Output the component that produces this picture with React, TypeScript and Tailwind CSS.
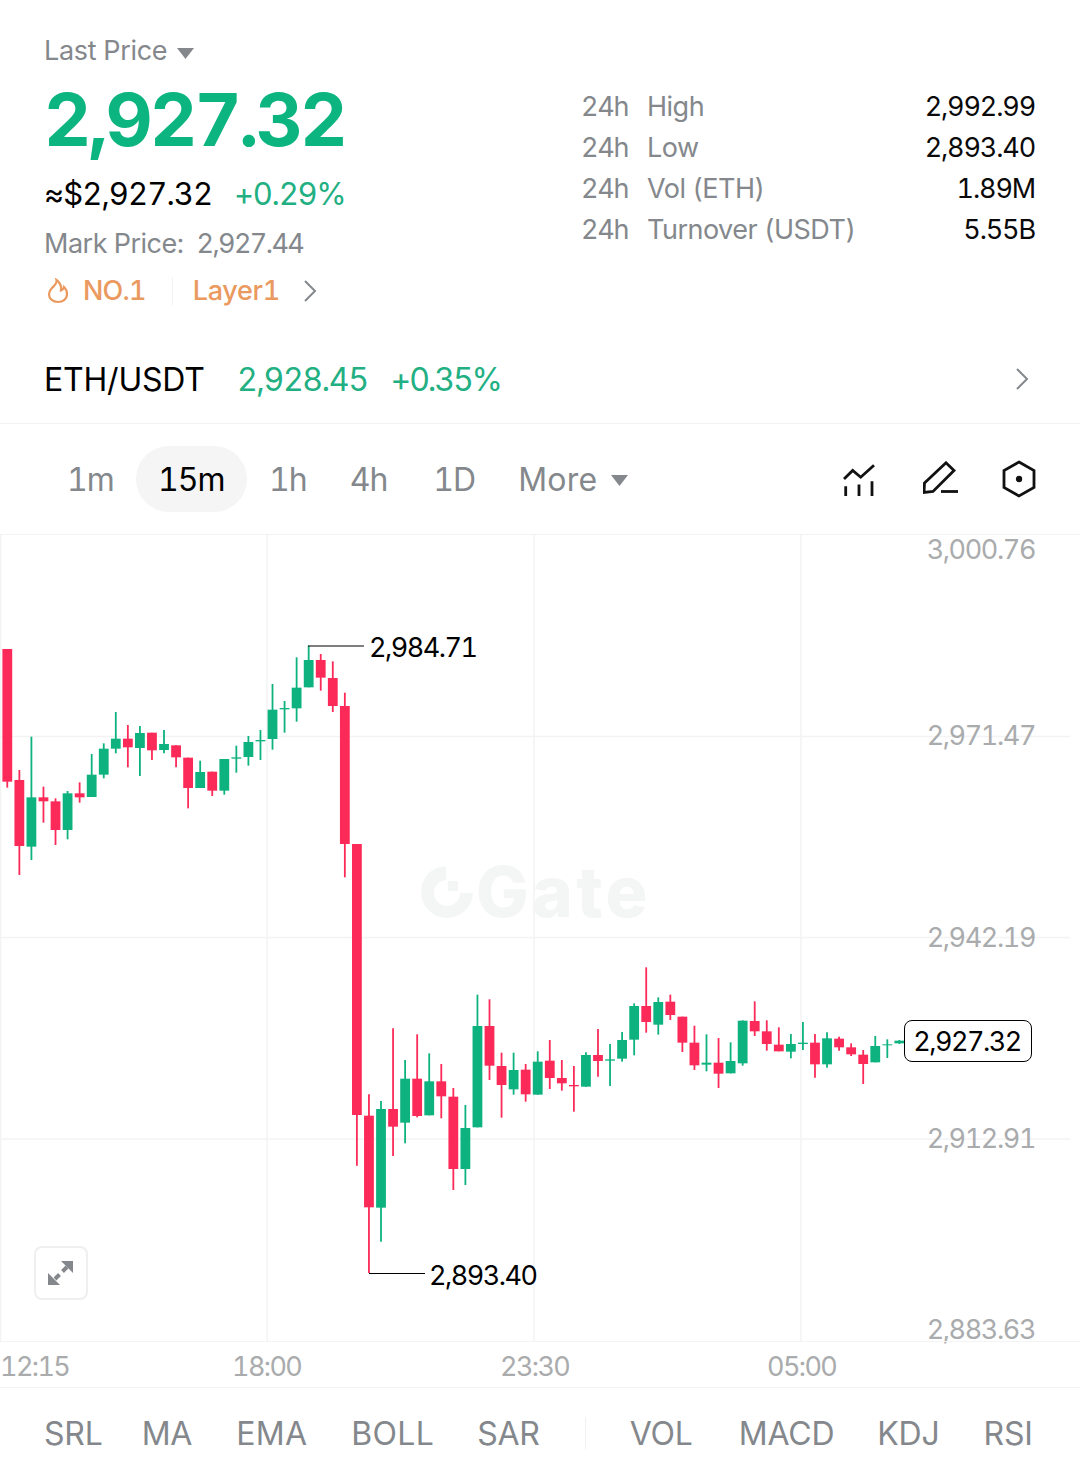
import React from "react";

const G = "#0db27e";
const R = "#fb2a58";

// [color, wickTop, bodyTop, bodyBottom, wickBottom]
type C = [0 | 1, number, number, number, number];
const z3 = (a: number) => 630 + a / 3;
const z4 = (a: number) => 960 + a / 3;

const raw1: C[] = [
  [1, 57, 57, 455, 473], [1, 420, 450, 648, 735], [0, 320, 502, 650, 690], [1, 470, 502, 514, 578],
  [1, 505, 514, 600, 645], [0, 483, 490, 600, 628], [1, 457, 490, 502, 518], [0, 372, 434, 501, 501],
  [0, 340, 356, 434, 445], [0, 246, 326, 356, 370], [1, 285, 326, 352, 412], [0, 288, 309, 354, 438],
  [1, 308, 308, 361, 390], [0, 300, 342, 360, 370], [1, 346, 346, 382, 412], [1, 383, 383, 474, 535],
  [0, 392, 426, 474, 474], [1, 425, 425, 482, 498], [0, 387, 387, 482, 494], [0, 347, 382, 386, 428],
  [0, 318, 336, 381, 407], [0, 300, 330, 334, 390], [0, 162, 239, 327, 359], [0, 213, 234, 238, 308],
  [0, 82, 173, 235, 275], [0, 47, 90, 172, 172], [1, 72, 90, 143, 182], [1, 94, 144, 228, 246],
  [1, 188, 228, 642, 742],
];
const raw2: C[] = [
  [1, -348, -348, 465, 617], [1, 403, 467, 742, 939], [0, 423, 447, 743, 845], [1, 205, 447, 500, 588],
  [0, 300, 356, 488, 550], [1, 223, 356, 468, 472], [0, 280, 364, 466, 466], [1, 312, 364, 409, 475],
  [1, 384, 410, 627, 690], [0, 435, 504, 627, 675], [0, 104, 198, 502, 502], [1, 118, 198, 317, 360],
  [1, 278, 318, 375, 473], [0, 278, 330, 388, 404], [1, 312, 329, 403, 425], [0, 274, 305, 404, 404],
  [1, 240, 302, 354, 387], [1, 300, 354, 370, 392], [1, 318, 375, 379, 455], [0, 277, 285, 380, 380],
  [1, 207, 285, 303, 350], [0, 252, 298, 302, 378], [0, 216, 240, 296, 305], [0, 130, 138, 239, 286],
  [1, 22, 138, 186, 218], [0, 112, 126, 194, 224], [1, 104, 125, 165, 180], [1, 170, 170, 248, 276],
  [1, 197, 248, 316, 330], [0, 223, 308, 314, 334], [1, 234, 308, 341, 384], [0, 247, 303, 340, 340],
  [0, 181, 182, 310, 317], [1, 124, 183, 214, 228], [1, 181, 214, 252, 272], [1, 202, 254, 274, 274],
  [0, 222, 252, 275, 295], [0, 186, 248, 252, 270], [1, 222, 248, 313, 353], [0, 217, 235, 313, 323],
  [1, 230, 236, 262, 272], [1, 250, 262, 283, 288], [1, 270, 284, 312, 372], [0, 228, 258, 307, 307],
  [0, 238, 253, 256, 294], [0, 240, 242, 250, 252],
];

const candles: C[] = [
  ...raw1.map(([c, a, b, d, e]) => [c, z3(a), z3(b), z3(d), z3(e)] as C),
  ...raw2.map(([c, a, b, d, e]) => [c, z4(a), z4(b), z4(d), z4(e)] as C),
];

function Chart() {
  const top = 535;
  return (
    <svg width="1080" height="806" viewBox={`0 ${top} 1080 806`} className="absolute left-0 top-0">
      {[0.5, 267, 534, 801].map((x) => (
        <line key={x} x1={x} x2={x} y1={top} y2={1341} stroke="#f3f3f3" strokeWidth="1.5" />
      ))}
      {[736.5, 937.5, 1139].map((y) => (
        <line key={y} x1={0} x2={1070} y1={y} y2={y} stroke="#f3f3f3" strokeWidth="1.5" />
      ))}
      {candles.map(([c, wt, bt, bb, wb], i) => {
        const x = 7.3 + i * 12.055;
        const col = c ? R : G;
        return (
          <g key={i}>
            <line x1={x} x2={x} y1={wt} y2={wb} stroke={col} strokeWidth="1.8" />
            <rect x={x - 4.9} y={bt} width={9.8} height={bb - bt} fill={col} />
          </g>
        );
      })}
      <line x1={308} x2={364} y1={646} y2={646} stroke="#000" strokeWidth="1.2" />
      <line x1={369} x2={425} y1={1273.5} y2={1273.5} stroke="#000" strokeWidth="1.2" />
    </svg>
  );
}

function Logo() {
  return (
    <svg width="56" height="56" viewBox="0 0 56 56" className="shrink-0">
      <path d="M27 2A26 26 0 1 0 54 29H41A13 13 0 1 1 27 16Z" fill="#f4f5f5" />
      <rect x="29" y="17" width="10" height="10" fill="#f4f5f5" />
    </svg>
  );
}

export default function App() {
  const axis: [string, string][] = [
    ["3,000.76", "top-[0px]"],
    ["2,971.47", "top-[186px]"],
    ["2,942.19", "top-[388px]"],
    ["2,912.91", "top-[589px]"],
    ["2,883.63", "top-[780px]"],
  ];
  return (
    <div className="w-[1080px] h-[1457px] bg-white overflow-hidden font-['Inter',sans-serif] text-black tabular-nums tracking-[-0.2px]">
      {/* header */}
      <section className="h-[424px] border-b border-[#f2f2f2] px-[44px] pt-[33px]">
        <div className="flex justify-between">
          <div className="w-[320px]">
            <div className="flex items-center gap-[10px] text-[27px] leading-[36px] text-[#84888c] tracking-[-0.3px]">
              Last Price
              <svg width="17" height="11" viewBox="0 0 17 11" className="mt-[4px]"><path d="M0 0H17L8.5 11Z" fill="#84888c" /></svg>
            </div>
            <div className="mt-[6px] text-[73px] leading-[90px] font-bold text-[#0cb57f] tracking-[-2.7px]">2,927.32</div>
            <div className="mt-[9px] flex items-center text-[31px] leading-[40px]">
              <span className="w-[190px] tracking-[-0.9px]">≈$2,927.32</span>
              <span className="text-[#22b083] tracking-[-1.3px]">+0.29%</span>
            </div>
            <div className="mt-[12px] flex text-[27px] leading-[36px] text-[#84888c] tracking-[-0.5px]">
              <span>Mark Price:</span>
              <span className="ml-[13px] tracking-[-1.6px]">2,927.44</span>
            </div>
            <div className="mt-[11px] flex items-center text-[27px] leading-[36px] font-medium text-[#ea9a5f] tracking-[-0.3px]">
              <svg width="22" height="26" viewBox="0 0 22 26" fill="none" stroke="#ea9a5f" strokeWidth="2.2" className="ml-[3px]">
                <path d="M9.5 2C10.5 6 7 7.5 4.5 10.5C2.5 13 2 15 2 16.5C2 21 6 24 11 24C16 24 20 21 20 16C20 13 18.5 10.5 17 9C16.5 11 15.5 12 14 12.5C14.5 8.5 13 4.5 9.5 2Z" />
              </svg>
              <span className="ml-[14px] tracking-[-0.8px]">NO.1</span>
              <span className="ml-[26px] w-px h-[28px] bg-[#f2f2f2]" />
              <span className="ml-[20px]">Layer1</span>
              <svg width="14" height="22" viewBox="0 0 14 22" fill="none" stroke="#84888c" strokeWidth="2" className="ml-[23px]"><path d="M2 1L12 11L2 21" /></svg>
            </div>
          </div>
          <div className="w-[454px] mr-[1px] mt-[53px] text-[27px] leading-[41px] tracking-[-0.5px]">
            {[
              ["24h", "High", "2,992.99"],
              ["24h", "Low", "2,893.40"],
              ["24h", "Vol (ETH)", "1.89M"],
              ["24h", "Turnover (USDT)", "5.55B"],
            ].map(([a, b, c]) => (
              <div key={b} className="flex">
                <span className="w-[66px] text-[#84888c] tracking-[-1.2px]">{a}</span>
                <span className="flex-1 text-[#84888c]">{b}</span>
                <span className="text-[#0a0a0a] tracking-[-1.15px]">{c}</span>
              </div>
            ))}
          </div>
        </div>
        <div className="mt-[51px] flex items-center text-[32px] leading-[40px]">
          <span className="w-[193px]">ETH/USDT</span>
          <span className="text-[#22b083] tracking-[-1.4px]">2,928.45</span>
          <span className="ml-[23px] text-[#22b083] tracking-[-2.1px]">+0.35%</span>
          <svg width="14" height="24" viewBox="0 0 14 24" fill="none" stroke="#84888c" strokeWidth="2" className="ml-auto mr-[7px] -mt-[2px]"><path d="M2 2L12 12L2 22" /></svg>
        </div>
      </section>

      {/* tabs */}
      <section className="h-[111px] border-b border-[#f2f2f2] pl-[44px] pr-[44px] flex items-center text-[32px] text-[#84888c] tracking-[-1px]">
        <span className="w-[92px] pl-[23px] pt-[2px] h-[66px] flex items-center">1m</span>
        <span className="w-[111px] pl-[22px] pt-[2px] h-[66px] flex items-center rounded-full bg-[#f5f5f5] text-black">15m</span>
        <span className="ml-[22px] pt-[2px] h-[66px] flex items-center">1h</span>
        <span className="ml-[43px] pt-[2px] h-[66px] flex items-center">4h</span>
        <span className="ml-[46px] pt-[2px] h-[66px] flex items-center">1D</span>
        <span className="ml-[43px] pt-[2px] h-[66px] flex items-center gap-[14px] tracking-[0.2px]">
          More
          <svg width="17" height="11" viewBox="0 0 17 11"><path d="M0 0H17L8.5 11Z" fill="#84888c" /></svg>
        </span>
        <div className="ml-auto flex items-center">
          <svg width="34" height="36" viewBox="0 0 34 36" fill="none" stroke="#111" strokeWidth="2.8">
            <path d="M1 18L9.7 9.5L17.7 16.2L31 4.2" />
            <path d="M2.7 25.2V35M16 23.5V35M29 20.2V35" />
          </svg>
          <svg width="36" height="36" viewBox="0 0 36 36" fill="none" stroke="#111" strokeWidth="2.8" className="ml-[46px]">
            <path d="M1.5 22L23 1.8L31 9.5L10 30.5L1 31.5Z" />
            <path d="M18 30.5H35" />
          </svg>
          <svg width="34" height="38" viewBox="0 0 34 38" fill="none" className="ml-[43px]">
            <path d="M17 2L32 10.5V27.5L17 36L2 27.5V10.5Z" stroke="#111" strokeWidth="2.8" />
            <circle cx="17" cy="19" r="3.2" fill="#111" />
          </svg>
        </div>
      </section>

      {/* chart */}
      <section className="relative h-[806px]">
        <Chart />
        <div className="absolute left-[419px] top-[321px] flex items-center gap-[1px] text-[70px] leading-[72px] font-extrabold text-[#f4f5f5] tracking-[3.2px]">
          <Logo />
          <span>Gate</span>
        </div>
        {axis.map(([t, cls]) => (
          <span key={t} className={`absolute right-[45px] text-[27px] leading-[30px] text-[#a9abad] tracking-[-1.4px] ${cls}`}>{t}</span>
        ))}
        <span className="absolute left-[369px] top-[98px] text-[27px] leading-[30px] tracking-[-1.5px]">2,984.71</span>
        <span className="absolute left-[429px] top-[726px] text-[27px] leading-[30px] tracking-[-1.5px]">2,893.40</span>
        <span className="absolute left-[904px] top-[485px] w-[128px] h-[42px] pt-[2px] pr-[2px] rounded-[8px] border border-black bg-white flex items-center justify-center text-[27px] tracking-[-1.5px]">2,927.32</span>
        <div className="absolute left-[34px] top-[711px] w-[54px] h-[54px] rounded-[8px] border-2 border-[#efefef] bg-white flex items-center justify-center">
          <svg width="28" height="28" viewBox="0 0 28 28" fill="#84888c" stroke="none">
            <path d="M14 2H26V14Z" />
            <path d="M1 14V26H13Z" />
            <path d="M20 8L15.5 12.5M8 20L12.5 15.5" stroke="#84888c" strokeWidth="4" />
          </svg>
        </div>
      </section>

      {/* time axis */}
      <section className="relative h-[47px] border-t border-b border-[#f4f4f4] text-[27px] text-[#a9abad] tracking-[-1.6px]">
        <span className="absolute left-[0px] top-[7px] leading-[36px]">12:15</span>
        <span className="absolute left-[232px] top-[7px] leading-[36px]">18:00</span>
        <span className="absolute left-[500px] top-[7px] leading-[36px]">23:30</span>
        <span className="absolute left-[767px] top-[7px] leading-[36px]">05:00</span>
      </section>

      {/* indicators */}
      <section className="h-[69px] pl-[44px] flex items-center text-[32px] text-[#84888c] overflow-hidden pt-[24px] pb-[2px]">
        <span>SRL</span>
        <span className="ml-[39px]">MA</span>
        <span className="ml-[44px] tracking-[0.3px]">EMA</span>
        <span className="ml-[44px] tracking-[0.3px]">BOLL</span>
        <span className="ml-[43px]">SAR</span>
        <span className="ml-[45px] w-px h-[32px] bg-[#f0f0f0] -mt-[2px]" />
        <span className="ml-[44px]">VOL</span>
        <span className="ml-[46px]">MACD</span>
        <span className="ml-[43px]">KDJ</span>
        <span className="ml-[44px] w-[47px] overflow-hidden">RSI</span>
      </section>
    </div>
  );
}
